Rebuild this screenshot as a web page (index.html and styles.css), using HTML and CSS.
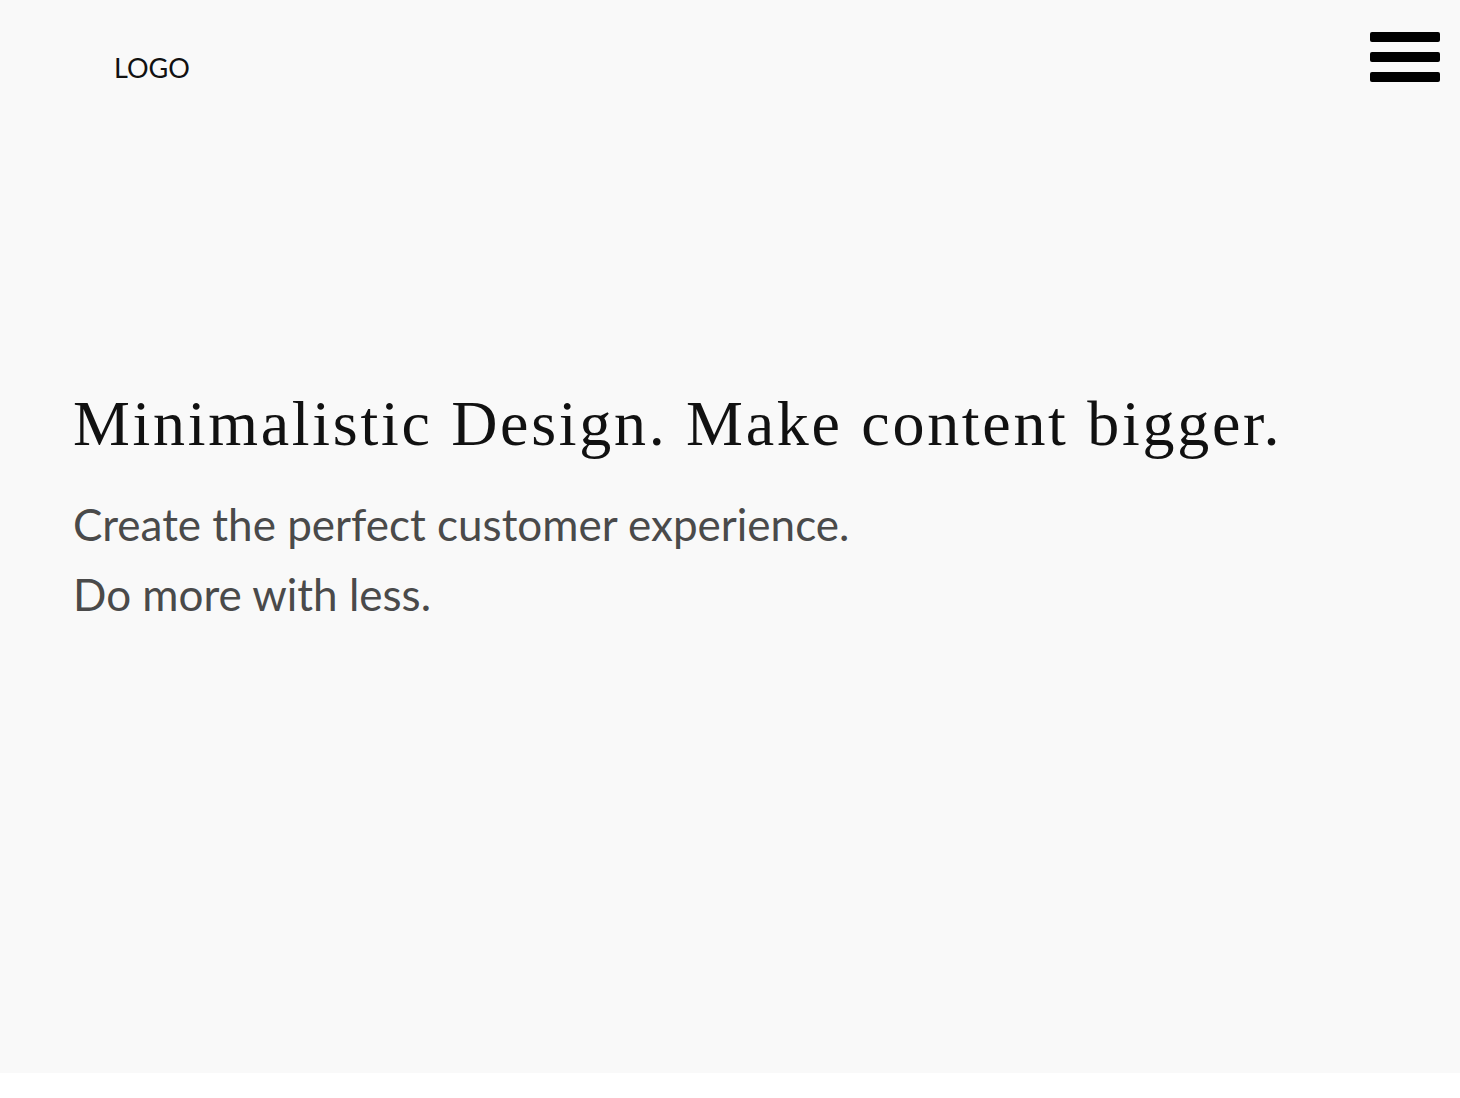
FILE: index.html
```html
<!DOCTYPE html>
<html lang="en">
<head>
<meta charset="utf-8">
<title>Minimalistic Design</title>
<link rel="stylesheet" href="styles.css">
</head>
<body>
<section class="hero">
  <header class="topbar">
    <div class="logo">LOGO</div>
    <button class="burger" aria-label="Menu">
      <span class="bar"></span>
      <span class="bar"></span>
      <span class="bar"></span>
    </button>
  </header>
  <div class="content">
    <h1 class="title">Minimalistic Design. Make content bigger.</h1>
    <p class="lead">Create the perfect customer experience.<br>Do more with less.</p>
  </div>
</section>
</body>
</html>
```
FILE: styles.css
```css
html, body {
  margin: 0;
  padding: 0;
  background: #ffffff;
}
.hero {
  background: #f9f9f9;
  height: 1073px;
  display: flex;
  flex-direction: column;
}
.topbar {
  display: flex;
  justify-content: space-between;
  align-items: flex-start;
  padding: 32px 20px 0 114px;
}
.logo {
  font-family: Lato, sans-serif;
  font-size: 27px;
  color: #111;
  margin-top: 22px;
  line-height: 1;
}
.burger {
  display: flex;
  flex-direction: column;
  gap: 10px;
  padding: 0;
  border: 0;
  background: none;
}
.bar {
  display: block;
  width: 70px;
  height: 10px;
  background: #000;
  border-radius: 2px;
}
.content {
  padding: 310px 0 0 73px;
}
.title {
  font-family: "Liberation Serif", serif;
  font-weight: normal;
  font-size: 64px;
  letter-spacing: 2.7px;
  color: #111;
  margin: 0;
  line-height: 1;
}
.lead {
  font-family: Lato, sans-serif;
  font-size: 44px;
  color: #4a4a4a;
  line-height: 70px;
  margin: 33px 0 0;
}
```
